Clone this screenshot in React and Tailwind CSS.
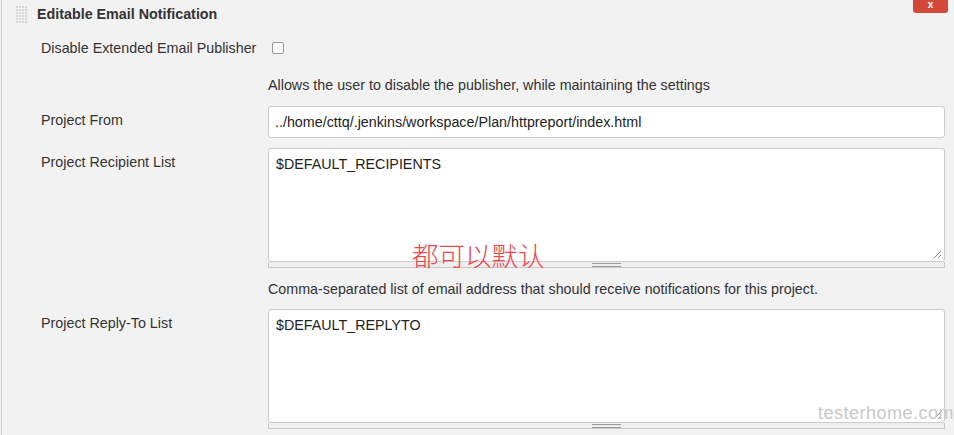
import React from "react";

function Grip() {
  const dots = [];
  for (let r = 0; r < 6; r++) {
    for (let c = 0; c < 4; c++) {
      dots.push(<rect key={r + "-" + c} x={c * 3} y={r * 3} width="2" height="2" fill="#d4d4d4" />);
    }
  }
  return (
    <svg width="12" height="18" viewBox="0 0 12 18" className="block">
      {dots}
    </svg>
  );
}

function ResizeCorner() {
  return (
    <svg width="10" height="10" viewBox="0 0 10 10" className="absolute right-[2px] bottom-[2px]">
      <path d="M9 2L2 9M9 6L6 9" stroke="#888" strokeWidth="1" />
    </svg>
  );
}

// textarea with the jenkins drag bar under it
function TextBox({ value }) {
  return (
    <div>
      <div className="relative h-[114px] rounded-[3px] border border-[#cccccc] bg-white px-[7px] pt-[7px] text-[14.3px] leading-[16px] text-[#222]">
        {value}
        <ResizeCorner />
      </div>
      <div className="flex h-[6px] items-center justify-center border-b border-x border-[#c8c8c8] bg-[#eeeeee]">
        <div className="h-[4px] w-[29px] border-y border-[#999]"></div>
      </div>
    </div>
  );
}

function Row({ label, children, className }) {
  return (
    <div className={"flex " + (className || "")}>
      <div className="w-[266px] shrink-0 whitespace-nowrap pl-[39px] pt-[6px] text-[14.3px] leading-[16px] text-[#333]">{label}</div>
      <div className="flex-1 pr-[9px]">{children}</div>
    </div>
  );
}

export default function App() {
  return (
    <div
      className="relative h-[435px] w-[954px] overflow-hidden bg-[#f2f2f2]"
      style={{ fontFamily: '"Liberation Sans", Arial, sans-serif' }}
    >
      <div className="ml-[1px] h-full border-l border-[#cfcfcf]">
        {/* header */}
        <div className="flex h-[28px] items-center">
          <div className="ml-[14px] mt-[1px]">
            <Grip />
          </div>
          <div className="ml-[9px] text-[14.3px] font-bold leading-[16px] text-[#333]">Editable Email Notification</div>
          <div className="ml-auto mr-[6px] flex h-[13px] w-[35px] items-start justify-center self-start rounded-b-[3px] bg-[#d24939]">
            <span className="text-[10px] font-bold leading-[9px] text-white">x</span>
          </div>
        </div>

        <div className="mt-[12px] flex items-center">
          <div className="w-[266px] shrink-0 whitespace-nowrap pl-[39px] text-[14.3px] leading-[16px] text-[#333]">
            Disable Extended Email Publisher
          </div>
          <div className="ml-[4px] h-[12px] w-[12px] rounded-[2px] border border-[#9a9a9a] bg-[#f8f8f8]"></div>
        </div>

        <div className="mt-[21px] pl-[266px] text-[14.3px] leading-[16px] text-[#333]">
          Allows the user to disable the publisher, while maintaining the settings
        </div>

        <Row label="Project From" className="mt-[13px]">
          <div className="h-[32px] rounded-[3px] border border-[#cccccc] bg-white px-[6px] pt-[7px] text-[14.3px] leading-[16px] text-[#222]">
            ../home/cttq/.jenkins/workspace/Plan/httpreport/index.html
          </div>
        </Row>

        <Row label="Project Recipient List" className="mt-[10px]">
          <TextBox value="$DEFAULT_RECIPIENTS" />
        </Row>

        <div className="mt-[13px] pl-[266px] text-[14.3px] leading-[16px] text-[#333]">
          Comma-separated list of email address that should receive notifications for this project.
        </div>

        <Row label="Project Reply-To List" className="mt-[12px]">
          <TextBox value="$DEFAULT_REPLYTO" />
        </Row>
      </div>

      {/* annotation */}
      <div
        className="absolute left-[412px] top-[242px] text-[26.5px] leading-none text-[#f0444c]"
        style={{ fontFamily: '"Noto Sans CJK SC", sans-serif', fontWeight: 300 }}
      >
        都可以默认
      </div>

      {/* watermark */}
      <div className="absolute left-[818px] top-[400px] text-[18px] font-light tracking-[0.5px] text-[#c8c8c8]">
        testerhome.com
      </div>
    </div>
  );
}
